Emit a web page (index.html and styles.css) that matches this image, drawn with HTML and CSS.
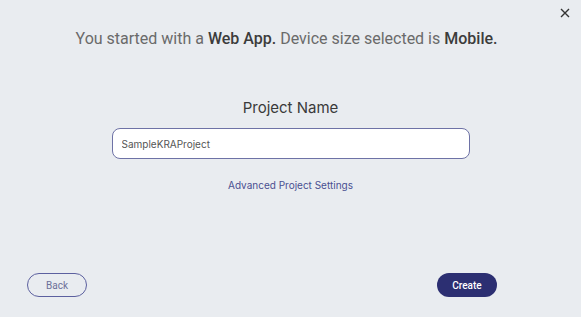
FILE: index.html
```html
<!DOCTYPE html>
<html lang="en">
<head>
    <meta charset="utf-8">
    <title>New Project</title>
    <link rel="stylesheet" href="styles.css">
</head>
<body>
    <div class="dialog">
        <div class="topbar">
            <button class="luk" aria-label="Close">
                <svg width="10" height="10" viewBox="0 0 10 10">
                    <path d="M1 1 L9 9 M9 1 L1 9" stroke="#333" stroke-width="1.4" fill="none"/>
                </svg>
            </button>
        </div>
        <p class="intro">You started with a <b>Web App.</b> Device size selected is <b>Mobile.</b></p>

        <section class="projekt">
            <h2>Project Name</h2>
            <input class="navn" type="text" value="SampleKRAProject">
            <a class="avanceret" href="#">Advanced Project Settings</a>
        </section>

        <footer>
            <button class="tilbage">Back</button>
            <button class="opret">Create</button>
        </footer>
    </div>
</body>
</html>
```

FILE: styles.css
```css
body {
    margin: 0;
    background-color: #e9ecf0;
    font-family: Roboto, "Liberation Sans", sans-serif;
}

.dialog {
    height: 317px;
    display: flex;
    flex-direction: column;
}

.topbar {
    display: flex;
    justify-content: flex-end;
    padding: 8px 11px 0 0;
}

.luk {
    border: none;
    background: none;
    padding: 0;
    width: 10px;
    height: 10px;
    display: flex;
}

.intro {
    margin: 11px 0 0 0;
    padding-right: 8px;
    text-align: center;
    font-size: 16px;
    color: #6a6a6a;
}

.intro b {
    font-weight: 500;
    color: #3c3c3c;
}

.projekt {
    display: flex;
    flex-direction: column;
    align-items: center;
    margin-top: 50px;
}

h2 {
    margin: 0;
    font-family: Inter, sans-serif;
    font-weight: 400;
    font-size: 15px;
    color: #3a3a3a;
}

.navn {
    box-sizing: border-box;
    width: 358px;
    height: 31px;
    margin-top: 11px;
    padding: 0 9px;
    border: 1px solid #6e72a6;
    border-radius: 8px;
    background: white;
    font-family: Inter, sans-serif;
    font-size: 10px;
    color: #555;
    outline: none;
}

.avanceret {
    margin-top: 20px;
    font-family: Inter, sans-serif;
    font-size: 10px;
    color: #4a4f90;
    text-decoration: none;
}

footer {
    margin-top: auto;
    display: flex;
    justify-content: space-between;
    padding: 0 84px 20px 27px;
}

footer button {
    width: 60px;
    height: 24px;
    border-radius: 12px;
    font-family: Roboto, sans-serif;
    font-size: 10px;
}

.tilbage {
    border: 1px solid #5c609f;
    background: transparent;
    color: #6d7099;
}

.opret {
    border: none;
    background-color: #2c2f72;
    color: white;
    font-weight: 500;
}
```
